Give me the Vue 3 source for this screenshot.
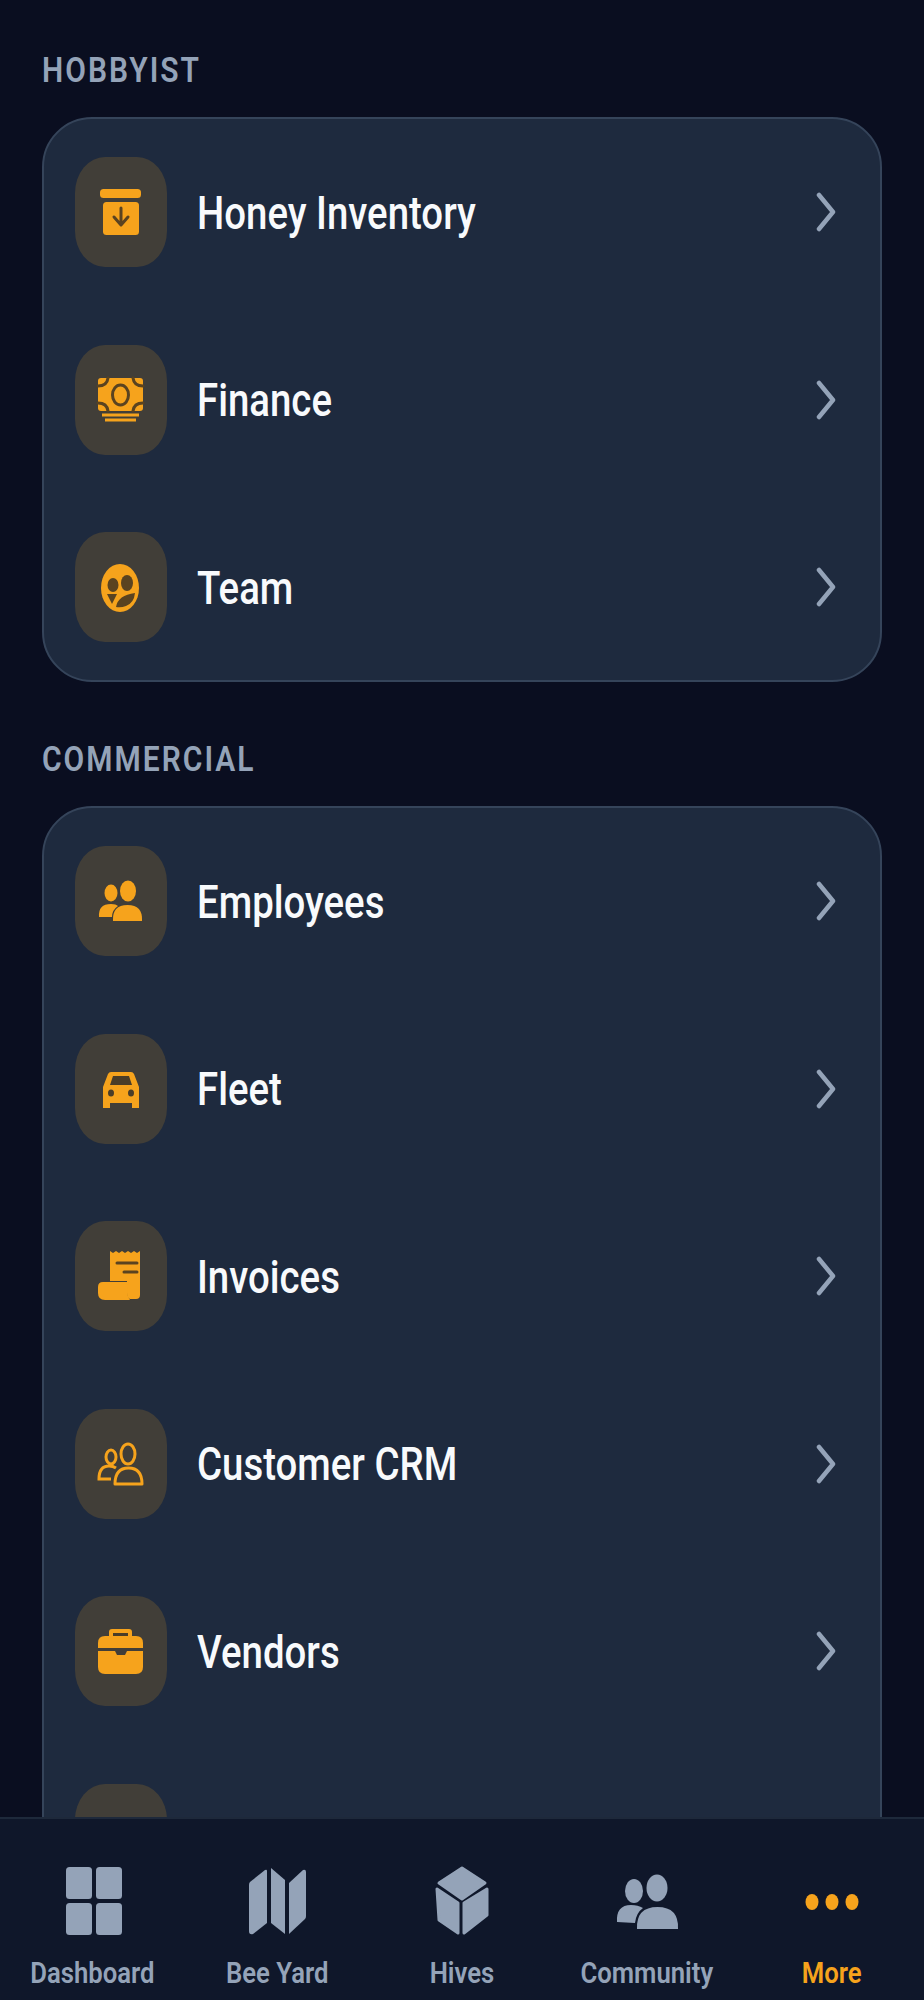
<template>
  <div class="page">
    <main class="content">
      <section v-for="group in groups" :key="group.title" class="group">
        <h2 class="group-title"><span>{{ group.title }}</span></h2>
        <div class="card">
          <div v-for="item in group.items" :key="item.id" class="row">
            <div class="tile">
              <svg class="tile-icon" viewBox="0 0 56 66">
                <g v-if="item.id === 'inventory'">
                  <rect x="7" y="10" width="41" height="9" rx="3.5" fill="#f6a31c" />
                  <rect x="10" y="23" width="36" height="33" rx="3.5" fill="#f6a31c" />
                  <path d="M28 29v16M21 38l7 8 7-8" class="cut" />
                </g>
                <g v-else-if="item.id === 'finance'">
                  <rect x="5" y="11" width="45" height="33" rx="3" fill="#f6a31c" />
                  <ellipse cx="27.5" cy="28" rx="8" ry="10" fill="none" stroke="#5a4320" stroke-width="3" />
                  <path d="M5 19q9 0 10-8M50 19q-9 0-10-8M5 36q9 0 10 8M50 36q-9 0-10 8" class="cut" />
                  <path d="M9 48h37M12 53h31" class="amber-line" />
                </g>
                <g v-else-if="item.id === 'team'">
                  <ellipse cx="27" cy="34" rx="19" ry="24" fill="#f6a31c" />
                  <ellipse cx="20" cy="31" rx="5.5" ry="7" fill="#5a4320" />
                  <ellipse cx="34" cy="29" rx="6" ry="8" fill="#5a4320" />
                  <path d="M14 40h10l-5 10z" fill="#5a4320" />
                  <path d="M23 53q2-12 19-14q-1 10-9 13q-5 2-10 1z" fill="#5a4320" />
                </g>
                <g v-else-if="item.id === 'employees'">
                  <ellipse cx="18" cy="25" rx="6.5" ry="8.5" fill="#f6a31c" />
                  <ellipse cx="35" cy="23" rx="8" ry="10.5" fill="#f6a31c" />
                  <path d="M6 49q-1-13 12-13q5 0 7 2q-6 4-6 11z" fill="#f6a31c" />
                  <path d="M20 53q-1-16 14.500-16t14.500 16z" fill="#f6a31c" />
                </g>
                <g v-else-if="item.id === 'fleet'">
                  <path d="M10 52V31l5-13q1-2 3-2h20q2 0 3 2l5 13v21h-7v-5H17v5z" fill="#f6a31c" />
                  <path d="M17 29l3-9h16l3 9z" fill="#4a3d28" />
                  <ellipse cx="18" cy="37" rx="3" ry="3.500" fill="#4a3d28" />
                  <ellipse cx="38" cy="37" rx="3" ry="3.500" fill="#4a3d28" />
                </g>
                <g v-else-if="item.id === 'invoices'">
                  <path d="M17 8l3 2 3-2 3 2 3-2 3 2 3-2 3 2 3-2 3 2 3-2v44q0 4-4 4h-6q-3-1-3-6V38H17z" fill="#f6a31c" />
                  <path d="M24 20h20M31 29h13" class="cut" />
                  <path d="M5 44q0-5 5-5h26q-2 3-2 8 0 6 3 10H12q-7 0-7-7z" fill="#f6a31c" />
                </g>
                <g v-else-if="item.id === 'crm'" fill="none" stroke="#f6a31c" stroke-width="3">
                  <ellipse cx="18" cy="26" rx="5" ry="7" />
                  <ellipse cx="35" cy="23" rx="7" ry="10" />
                  <path d="M23 37q-3-2-7-2q-10 0-10 13h12" />
                  <path d="M22 53q0-16 13.500-16t13.500 16z" stroke-linejoin="round" />
                </g>
                <g v-else-if="item.id === 'vendors'">
                  <rect x="16" y="11" width="23" height="10" rx="3" fill="#f6a31c" />
                  <rect x="20" y="15" width="15" height="3" fill="#4a3d28" />
                  <path d="M5 30v-5q0-7 7-7h31q7 0 7 7v5z" fill="#f6a31c" />
                  <path d="M5 33h17l2 4h8l2-4h16v16q0 7-7 7H12q-7 0-7-7z" fill="#f6a31c" />
                </g>
              </svg>
            </div>
            <span v-if="item.name" class="row-name">{{ item.name }}</span>
            <svg v-if="item.name" class="chevron" viewBox="0 0 20 40">
              <path d="M3 3l14 17L3 37" />
            </svg>
          </div>
        </div>
      </section>
    </main>

    <nav class="tabbar">
      <div v-for="tab in tabs" :key="tab.id" class="tab" :class="{ active: tab.id === 'more' }">
        <svg class="tab-icon" viewBox="0 0 70 72">
          <g v-if="tab.id === 'dashboard'">
            <rect x="9" y="2" width="26" height="32" rx="3.500" />
            <rect x="39" y="2" width="26" height="32" rx="3.500" />
            <rect x="9" y="38" width="26" height="32" rx="3.500" />
            <rect x="39" y="38" width="26" height="32" rx="3.500" />
          </g>
          <g v-else-if="tab.id === 'yard'">
            <path d="M23 5q2-1 2 1v52l-14 11q-4 1-4-3V20q0-2 1-3z" />
            <path d="M29 3l14 12v54L29 58z" />
            <path d="M47 18l14-13q3-1 3 2v44q0 2-1 3L47 69z" />
          </g>
          <g v-else-if="tab.id === 'hives'">
            <path d="M35 3l23 15-23 16-23-16z" class="hive-face" />
            <path d="M10 24l21 14v30L12 55z" class="hive-face" />
            <path d="M60 24L37 38v30l23-18z" class="hive-face" />
          </g>
          <g v-else-if="tab.id === 'community'">
            <ellipse cx="22" cy="26" rx="9" ry="12" />
            <ellipse cx="45" cy="23" rx="10.500" ry="13.500" />
            <path d="M5 57q-1-17 14-17q7 0 12 3q-7 5-8 15z" />
            <path d="M25 64q-1-22 20.500-22t20.500 22z" />
          </g>
          <g v-else>
            <ellipse cx="15" cy="37" rx="6.500" ry="8" />
            <ellipse cx="35" cy="37" rx="6.500" ry="8" />
            <ellipse cx="55" cy="37" rx="6.500" ry="8" />
          </g>
        </svg>
        <span class="tab-label">{{ tab.label }}</span>
      </div>
    </nav>
  </div>
</template>

<script setup>
const groups = [
  {
    title: 'HOBBYIST',
    items: [
      { id: 'inventory', name: 'Honey Inventory' },
      { id: 'finance', name: 'Finance' },
      { id: 'team', name: 'Team' },
    ],
  },
  {
    title: 'COMMERCIAL',
    items: [
      { id: 'employees', name: 'Employees' },
      { id: 'fleet', name: 'Fleet' },
      { id: 'invoices', name: 'Invoices' },
      { id: 'crm', name: 'Customer CRM' },
      { id: 'vendors', name: 'Vendors' },
      { id: 'cut-off', name: '' },
    ],
  },
];

const tabs = [
  { id: 'dashboard', label: 'Dashboard' },
  { id: 'yard', label: 'Bee Yard' },
  { id: 'hives', label: 'Hives' },
  { id: 'community', label: 'Community' },
  { id: 'more', label: 'More' },
];
</script>

<style>
html,
body {
  margin: 0;
  background: #0a0e20;
}
</style>

<style scoped>
.page {
  width: 924px;
  height: 2000px;
  display: flex;
  flex-direction: column;
  overflow: hidden;
  background: #0a0e20;
  font-family: Roboto, "Liberation Sans", sans-serif;
}

.content {
  flex: 1;
  min-height: 0;
  overflow: hidden;
  padding: 50px 42px 0;
}

.group + .group {
  margin-top: 57px;
}

.group-title {
  margin: 0 0 28px;
  height: 39px;
  line-height: 39px;
  font-size: 30px;
  font-weight: 600;
  letter-spacing: 2px;
  color: #94a3b8;
}

.group-title span,
.tab-label {
  display: inline-block;
  transform: scaleY(1.16);
}

.card {
  border: 2px solid #35445a;
  border-radius: 50px;
  background: #1e2a3e;
  padding: 38px 31px;
  display: flex;
  flex-direction: column;
  gap: 77.500px;
}

.row {
  display: flex;
  align-items: center;
  height: 110px;
  flex-shrink: 0;
}

.tile {
  width: 92px;
  height: 110px;
  flex-shrink: 0;
  border-radius: 30px / 36px;
  background: #413e38;
  display: flex;
  align-items: center;
  justify-content: center;
}

.tile-icon {
  width: 56px;
  height: 66px;
}

.cut {
  fill: none;
  stroke: #5a4320;
  stroke-width: 3;
  stroke-linecap: round;
  stroke-linejoin: round;
}

.amber-line {
  fill: none;
  stroke: #f6a31c;
  stroke-width: 3;
}

.row-name {
  display: inline-block;
  margin-left: 30px;
  flex: 1;
  font-size: 38.400px;
  font-weight: 500;
  color: #f8fafc;
  transform: scaleY(1.2);
}

.chevron {
  width: 20px;
  height: 40px;
  margin-right: 13px;
  fill: none;
  stroke: #94a3b8;
  stroke-width: 4.500;
  stroke-linecap: round;
  stroke-linejoin: round;
}

.tabbar {
  height: 183px;
  box-sizing: border-box;
  flex-shrink: 0;
  border-top: 2px solid #1e293b;
  background: #0f172a;
  display: flex;
  padding-top: 46px;
}

.tab {
  flex: 1;
  display: flex;
  flex-direction: column;
  align-items: center;
  color: #94a3b8;
}

.tab.active {
  color: #f6a31c;
}

.tab-icon {
  width: 70px;
  height: 72px;
  fill: currentColor;
}

.hive-face {
  stroke: currentColor;
  stroke-width: 3;
  stroke-linejoin: round;
}

.tab-label {
  margin-top: 21px;
  font-size: 25.700px;
  font-weight: 600;
  white-space: nowrap;
}
</style>
